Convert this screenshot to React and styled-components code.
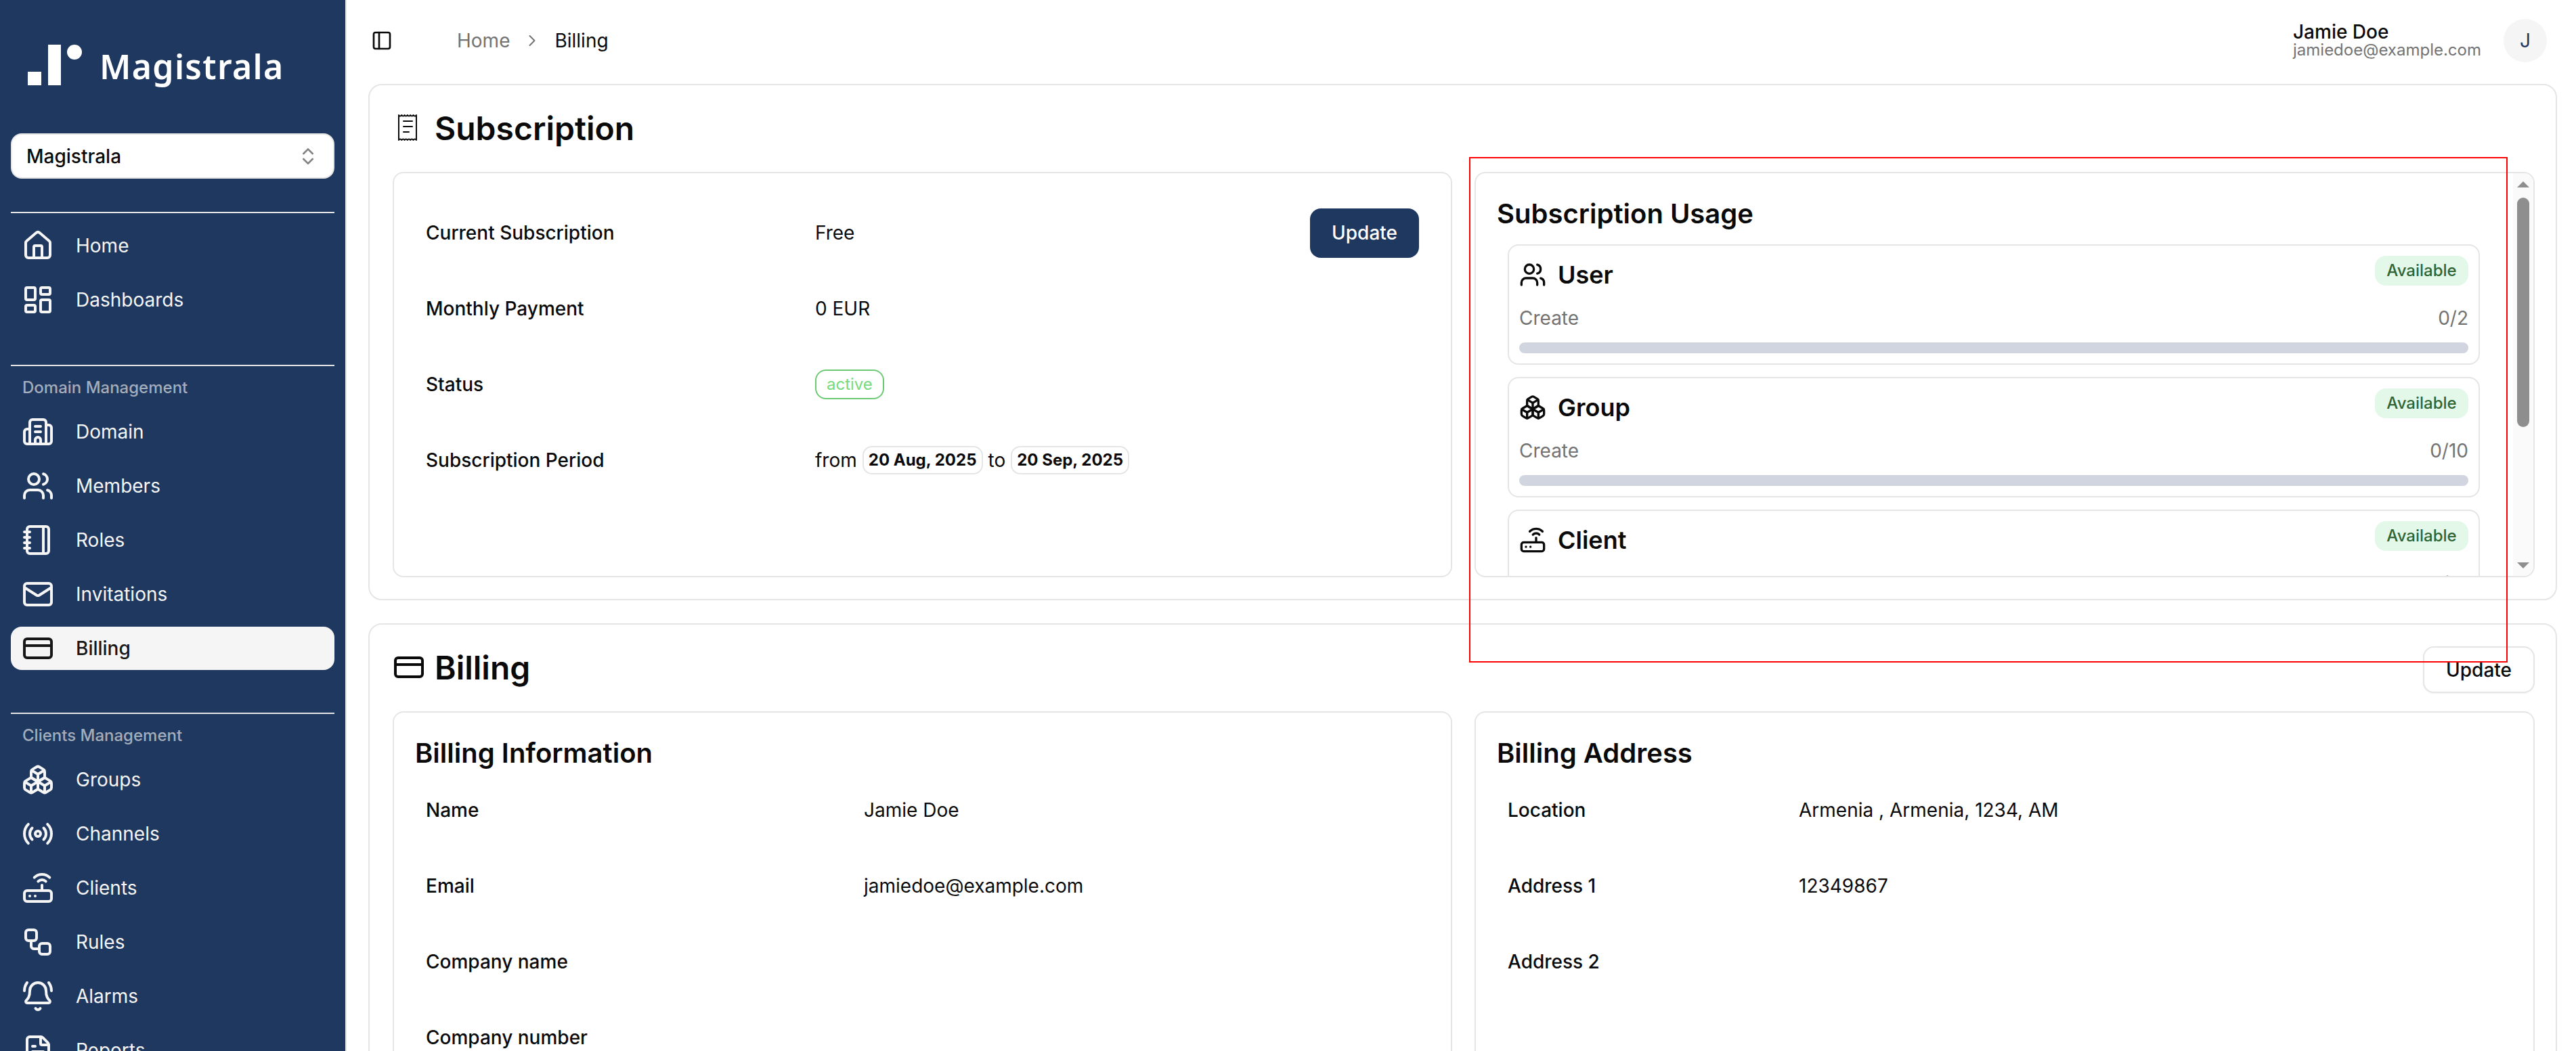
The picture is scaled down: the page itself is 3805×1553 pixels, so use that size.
import React from "react";
import styled, { createGlobalStyle } from "styled-components";
import {
  House,
  LayoutDashboard,
  Building2,
  Users,
  Notebook,
  Mail,
  CreditCard,
  Boxes,
  Radio,
  Router,
  Workflow,
  BellRing,
  FileText,
  PanelLeft,
  ChevronRight,
  ChevronsUpDown,
} from "lucide-react";

const GlobalStyle = createGlobalStyle`
  html, body {
    margin: 0;
    padding: 0;
    height: 100%;
    overflow: hidden;
    background: #fff;
  }
  * { box-sizing: border-box; }
  body {
    font-family: Inter, "Liberation Sans", sans-serif;
    font-size: 28px;
    color: #0a0a0a;
  }
`;

const Shell = styled.div`
  position: relative;
  display: flex;
  width: 3805px;
  height: 1553px;
  overflow: hidden;
`;

const Sidebar = styled.aside`
  width: 512px;
  flex: none;
  height: 1553px;
  overflow: hidden;
  background: #1f3860;
  border-right: 2px solid #e5e5e5;
  padding: 0 16px;
  color: #f5f5f5;
`;

const Logo = styled.div`
  display: flex;
  align-items: flex-start;
  height: 197px;
  padding: 66px 0 0 25px;
`;

const LogoName = styled.span`
  margin: -2px 0 0 22px;
  font-family: "Noto Sans", sans-serif;
  font-size: 50px;
  line-height: 68px;
  font-weight: 600;
  letter-spacing: 1.3px;
  color: #fff;
`;

const DomainSelect = styled.div`
  display: flex;
  align-items: center;
  justify-content: space-between;
  height: 67px;
  padding: 0 21px;
  background: #fff;
  border: 2px solid #e5e5e5;
  border-radius: 16px;
  color: #0a0a0a;
  font-weight: 500;
  svg { opacity: 0.5; }
`;

const Group = styled.div`
  margin-top: ${(p) => p.$top}px;
  border-top: 2px solid #e5e5e5;
  padding-top: 16px;
`;

const GroupLabel = styled.div`
  height: 32px;
  line-height: 32px;
  padding-left: 17px;
  margin-bottom: 17px;
  font-size: 24px;
  font-weight: 500;
  color: #a3adbc;
`;

const NavItem = styled.div`
  display: flex;
  align-items: center;
  gap: 32px;
  height: 64px;
  margin-bottom: 16px;
  padding-left: 16px;
  border-radius: 16px;
  background: ${(p) => (p.$active ? "#f5f5f5" : "transparent")};
  color: ${(p) => (p.$active ? "#171717" : "#f5f5f5")};
  font-weight: ${(p) => (p.$active ? 500 : 400)};
`;

const Main = styled.main`
  flex: 1;
  min-width: 0;
  padding: 0 28px 0 32px;
`;

const TopBar = styled.header`
  display: flex;
  align-items: center;
  height: 124px;
  padding: 0 15px 4px 4px;
`;

const Crumbs = styled.nav`
  display: flex;
  align-items: center;
  gap: 19px;
  margin-left: 95px;
  flex: 1;
`;

const Crumb = styled.span`
  color: ${(p) => (p.$current ? "#0a0a0a" : "#737373")};
`;

const CrumbArrow = styled.span`
  display: flex;
  color: #737373;
`;

const UserBlock = styled.div`
  display: flex;
  flex-direction: column;
  margin-right: 34px;
  width: 277px;
`;

const UserName = styled.span`
  font-weight: 500;
  line-height: 28px;
`;

const UserMail = styled.span`
  font-size: 24px;
  line-height: 26px;
  color: #737373;
`;

const Avatar = styled.div`
  display: flex;
  align-items: center;
  justify-content: center;
  width: 64px;
  height: 64px;
  border-radius: 50%;
  background: #f5f5f5;
  color: #1f3860;
`;

const Section = styled.section`
  border: 2px solid #e5e5e5;
  border-radius: 20px;
  padding: 32px 31px 32px 34px;
  margin-bottom: 34px;
  background: #fff;
`;

const SectionHead = styled.div`
  display: flex;
  align-items: flex-start;
  justify-content: space-between;
  margin-bottom: ${(p) => p.$gap}px;
`;

const SectionTitle = styled.h2`
  display: flex;
  align-items: center;
  gap: 14px;
  margin: 0;
  height: 62px;
  font-size: 48px;
  font-weight: 600;
`;

const Columns = styled.div`
  display: grid;
  grid-template-columns: 1565px 1fr;
  gap: 33px;
`;

const Panel = styled.div`
  border: 2px solid #e5e5e5;
  border-radius: 16px;
  height: ${(p) => p.$height}px;
  padding: 32px 31px;
  overflow: hidden;
`;

const PanelTitle = styled.h3`
  margin: 0;
  font-size: 40px;
  line-height: 56px;
  font-weight: 600;
`;

const Rows = styled.div`
  padding: 0 16px;
`;

const Row = styled.div`
  display: grid;
  grid-template-columns: ${(p) => p.$label}px 1fr auto;
  align-items: center;
  height: 112px;
`;

const RowLabel = styled.span`
  font-weight: 500;
`;

const Period = styled.span`
  display: flex;
  align-items: center;
  gap: 8px;
`;

const DatePill = styled.span`
  padding: 0 7px;
  height: 42px;
  line-height: 38px;
  border: 2px solid #e5e5e5;
  border-radius: 14px;
  font-size: 24px;
  font-weight: 700;
`;

const StatusPill = styled.span`
  display: inline-block;
  height: 44px;
  line-height: 40px;
  padding: 0 15px;
  border: 2px solid #6ccb72;
  border-radius: 16px;
  font-size: 24px;
  color: #76db7d;
`;

const Button = styled.button`
  height: ${(p) => p.$height}px;
  padding: 0 ${(p) => p.$pad}px;
  font-family: inherit;
  font-size: 28px;
  font-weight: 500;
  border-radius: 16px;
  border: 2px solid ${(p) => (p.$primary ? "#1f3860" : "#e5e5e5")};
  background: ${(p) => (p.$primary ? "#1f3860" : "#fff")};
  color: ${(p) => (p.$primary ? "#fff" : "#0a0a0a")};
  box-shadow: 0 1px 2px rgba(0, 0, 0, 0.05);
`;

const UsagePanel = styled.div`
  display: flex;
  height: 599px;
  border: 2px solid #e5e5e5;
  border-radius: 16px;
  overflow: hidden;
`;

const UsageScroll = styled.div`
  flex: 1;
  min-width: 0;
  overflow: hidden;
  padding: 32px 49px 0 31px;
`;

const UsageList = styled.div`
  display: flex;
  flex-direction: column;
  gap: 18px;
  margin: 17px 0 0 16px;
`;

const UsageCard = styled.article`
  flex: none;
  height: 178px;
  padding: 15px;
  border: 2px solid #e5e5e5;
  border-radius: 16px;
`;

const UsageTop = styled.div`
  display: flex;
  align-items: flex-start;
  justify-content: space-between;
  height: 56px;
`;

const UsageName = styled.div`
  display: flex;
  align-items: center;
  gap: 17px;
  margin-top: 6px;
  height: 44px;
  font-size: 36px;
  font-weight: 600;
`;

const AvailableBadge = styled.span`
  width: 138px;
  height: 44px;
  line-height: 44px;
  text-align: center;
  border-radius: 16px;
  background: #e3f8e8;
  color: #2f6435;
  font-size: 24px;
  font-weight: 500;
`;

const UsageMeta = styled.div`
  display: flex;
  justify-content: space-between;
  align-items: center;
  height: 40px;
  margin-top: 16px;
  color: #737373;
`;

const UsageBar = styled.div`
  height: 16px;
  margin-top: 16px;
  border-radius: 8px;
  background: #d1d5df;
`;

const ScrollTrack = styled.div`
  flex: none;
  display: flex;
  flex-direction: column;
  align-items: center;
  width: 30px;
  background: #fafafa;
  padding: 12px 0 11px;
`;

const ScrollArrow = styled.span`
  width: 0;
  height: 0;
  border-left: 9px solid transparent;
  border-right: 9px solid transparent;
  border-${(p) => (p.$down ? "top" : "bottom")}: 9px solid #8e8e8e;
  margin-top: ${(p) => (p.$down ? "auto" : "0")};
`;

const ScrollThumb = styled.span`
  width: 18px;
  height: 339px;
  margin-top: 15px;
  border-radius: 9px;
  background: #8e8e8e;
`;

const Annotation = styled.div`
  position: absolute;
  left: 2170px;
  top: 232px;
  width: 1534px;
  height: 747px;
  border: 2px solid #ff0000;
  pointer-events: none;
`;

const LogoMark = () => (
  <svg width="84" height="60" viewBox="0 0 84 60">
    <rect x="0" y="40" width="20" height="20" fill="#fff" />
    <rect x="30" y="0" width="19" height="60" fill="#fff" />
    <circle cx="69" cy="11" r="11" fill="#fff" />
  </svg>
);

const ReceiptIcon = () => (
  <svg width="48" height="48" viewBox="0 0 48 48" fill="none" stroke="#0a0a0a" strokeWidth="2" strokeLinecap="round" strokeLinejoin="round">
    <path d="M9 5q2.200 3 4.300 0q2.200 3 4.300 0q2.100 3 4.300 0q2.200 3 4.300 0q2.200 3 4.300 0q2.100 3 4.500 0V42q-2.400 -3 -4.500 0q-2.200 -3 -4.300 0q-2.200 -3 -4.300 0q-2.200 -3 -4.300 0q-2.100 -3 -4.300 0q-2.200 -3 -4.300 0Z" />
    <path d="M16 14h13M16 22h13M16 30h8" />
  </svg>
);

const domainNav = [
  { label: "Domain", icon: Building2 },
  { label: "Members", icon: Users },
  { label: "Roles", icon: Notebook },
  { label: "Invitations", icon: Mail },
  { label: "Billing", icon: CreditCard, active: true },
];

const clientNav = [
  { label: "Groups", icon: Boxes },
  { label: "Channels", icon: Radio },
  { label: "Clients", icon: Router },
  { label: "Rules", icon: Workflow },
  { label: "Alarms", icon: BellRing },
  { label: "Reports", icon: FileText },
];

const usage = [
  { name: "User", icon: Users, value: "0/2" },
  { name: "Group", icon: Boxes, value: "0/10" },
  { name: "Client", icon: Router, value: "0/10" },
];

const NavLink = ({ item }) => {
  const Icon = item.icon;
  return (
    <NavItem $active={item.active}>
      <Icon size={48} strokeWidth={2} />
      {item.label}
    </NavItem>
  );
};

const App = () => (
  <Shell>
    <GlobalStyle />
    <Sidebar>
      <Logo>
        <LogoMark />
        <LogoName>Magistrala</LogoName>
      </Logo>
      <DomainSelect>
        Magistrala
        <ChevronsUpDown size={32} strokeWidth={2} />
      </DomainSelect>

      <Group $top={49}>
        <NavLink item={{ label: "Home", icon: House }} />
        <NavLink item={{ label: "Dashboards", icon: LayoutDashboard }} />
      </Group>

      <Group $top={64}>
        <GroupLabel>Domain Management</GroupLabel>
        {domainNav.map((item) => (
          <NavLink key={item.label} item={item} />
        ))}
      </Group>

      <Group $top={63}>
        <GroupLabel>Clients Management</GroupLabel>
        {clientNav.map((item) => (
          <NavLink key={item.label} item={item} />
        ))}
      </Group>
    </Sidebar>

    <Main>
      <TopBar>
        <PanelLeft size={32} strokeWidth={2} />
        <Crumbs>
          <Crumb>Home</Crumb>
          <CrumbArrow>
            <ChevronRight size={28} strokeWidth={1.75} />
          </CrumbArrow>
          <Crumb $current>Billing</Crumb>
        </Crumbs>
        <UserBlock>
          <UserName>Jamie Doe</UserName>
          <UserMail>jamiedoe@example.com</UserMail>
        </UserBlock>
        <Avatar>J</Avatar>
      </TopBar>

      <Section>
        <SectionHead $gap={34}>
          <SectionTitle>
            <ReceiptIcon />
            Subscription
          </SectionTitle>
        </SectionHead>
        <Columns>
          <Panel $height={599}>
            <Rows>
              <Row $label={575}>
                <RowLabel>Current Subscription</RowLabel>
                <span>Free</span>
                <Button $primary $height={73} $pad={30}>Update</Button>
              </Row>
              <Row $label={575}>
                <RowLabel>Monthly Payment</RowLabel>
                <span>0 EUR</span>
              </Row>
              <Row $label={575}>
                <RowLabel>Status</RowLabel>
                <span>
                  <StatusPill>active</StatusPill>
                </span>
              </Row>
              <Row $label={575}>
                <RowLabel>Subscription Period</RowLabel>
                <Period>
                  from <DatePill>20 Aug, 2025</DatePill> to <DatePill>20 Sep, 2025</DatePill>
                </Period>
              </Row>
            </Rows>
          </Panel>

          <UsagePanel>
            <UsageScroll>
              <PanelTitle>Subscription Usage</PanelTitle>
              <UsageList>
                {usage.map(({ name, icon: Icon, value }) => (
                  <UsageCard key={name}>
                    <UsageTop>
                      <UsageName>
                        <Icon size={40} strokeWidth={2} />
                        {name}
                      </UsageName>
                      <AvailableBadge>Available</AvailableBadge>
                    </UsageTop>
                    <UsageMeta>
                      <span>Create</span>
                      <span>{value}</span>
                    </UsageMeta>
                    <UsageBar />
                  </UsageCard>
                ))}
              </UsageList>
            </UsageScroll>
            <ScrollTrack>
              <ScrollArrow />
              <ScrollThumb />
              <ScrollArrow $down />
            </ScrollTrack>
          </UsagePanel>
        </Columns>
      </Section>

      <Section>
        <SectionHead $gap={27}>
          <SectionTitle>
            <CreditCard size={48} strokeWidth={2} />
            Billing
          </SectionTitle>
          <Button $height={69} $pad={32}>Update</Button>
        </SectionHead>
        <Columns>
          <Panel $height={900}>
            <PanelTitle>Billing Information</PanelTitle>
            <Rows>
              <Row $label={647}>
                <RowLabel>Name</RowLabel>
                <span>Jamie Doe</span>
              </Row>
              <Row $label={647}>
                <RowLabel>Email</RowLabel>
                <span>jamiedoe@example.com</span>
              </Row>
              <Row $label={647}>
                <RowLabel>Company name</RowLabel>
              </Row>
              <Row $label={647}>
                <RowLabel>Company number</RowLabel>
              </Row>
            </Rows>
          </Panel>
          <Panel $height={900}>
            <PanelTitle>Billing Address</PanelTitle>
            <Rows>
              <Row $label={430}>
                <RowLabel>Location</RowLabel>
                <span>Armenia , Armenia, 1234, AM</span>
              </Row>
              <Row $label={430}>
                <RowLabel>Address 1</RowLabel>
                <span>12349867</span>
              </Row>
              <Row $label={430}>
                <RowLabel>Address 2</RowLabel>
              </Row>
            </Rows>
          </Panel>
        </Columns>
      </Section>
    </Main>

    <Annotation />
  </Shell>
);

export default App;
